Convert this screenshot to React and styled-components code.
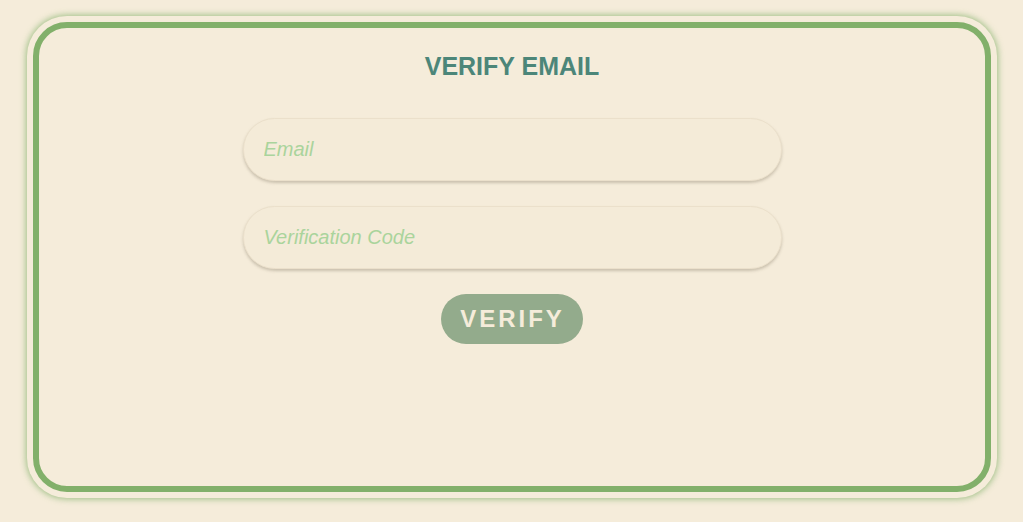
import styled, { createGlobalStyle } from "styled-components";

const GlobalStyle = createGlobalStyle`
  html, body {
    margin: 0;
    padding: 0;
    background: #f5ecda;
    font-family: "Liberation Sans", Arial, sans-serif;
  }
`;

const Page = styled.div`
  width: 1023px;
  height: 522px;
  box-sizing: border-box;
  padding: 16px 26px 24px 27px;
`;

const Frame = styled.div`
  height: 100%;
  box-sizing: border-box;
  padding: 6px;
  border-radius: 40px;
  background: #f5ecda;
  box-shadow: 0 0 6px 1px rgba(130, 176, 106, 0.75);
`;

const Card = styled.div`
  height: 100%;
  box-sizing: border-box;
  border: 6px solid #82b06a;
  border-radius: 34px;
  display: flex;
  flex-direction: column;
  align-items: center;
  padding-top: 23px;
`;

const Title = styled.h1`
  margin: 0 0 37px;
  font-size: 25px;
  font-weight: bold;
  color: #4c8679;
  line-height: 30px;
`;

const Form = styled.form`
  display: flex;
  flex-direction: column;
  align-items: center;
  gap: 25px;
`;

const Input = styled.input`
  width: 539px;
  height: 63px;
  box-sizing: border-box;
  border-radius: 32px;
  border: 1px solid #ebe0cb;
  background: #f4ebd8;
  padding: 0 20px;
  font-family: "Liberation Sans", Arial, sans-serif;
  font-size: 20px;
  font-style: italic;
  outline: none;
  box-shadow: 0 2px 3px rgba(140, 130, 110, 0.4);

  &::placeholder {
    color: #aad49c;
    font-style: italic;
  }
`;

const Button = styled.button`
  width: 142px;
  height: 50px;
  border: none;
  border-radius: 25px;
  background: #93ab8c;
  color: #f5ecda;
  font-family: "Liberation Sans", Arial, sans-serif;
  font-size: 24px;
  font-weight: bold;
  letter-spacing: 3px;
  cursor: pointer;
  padding: 0 0 0 1px;
`;

export default function App() {
  return (
    <>
      <GlobalStyle />
      <Page>
        <Frame>
          <Card>
            <Title>VERIFY EMAIL</Title>
            <Form onSubmit={(e) => e.preventDefault()}>
              <Input type="email" placeholder="Email" />
              <Input type="text" placeholder="Verification Code" />
              <Button type="submit">VERIFY</Button>
            </Form>
          </Card>
        </Frame>
      </Page>
    </>
  );
}
